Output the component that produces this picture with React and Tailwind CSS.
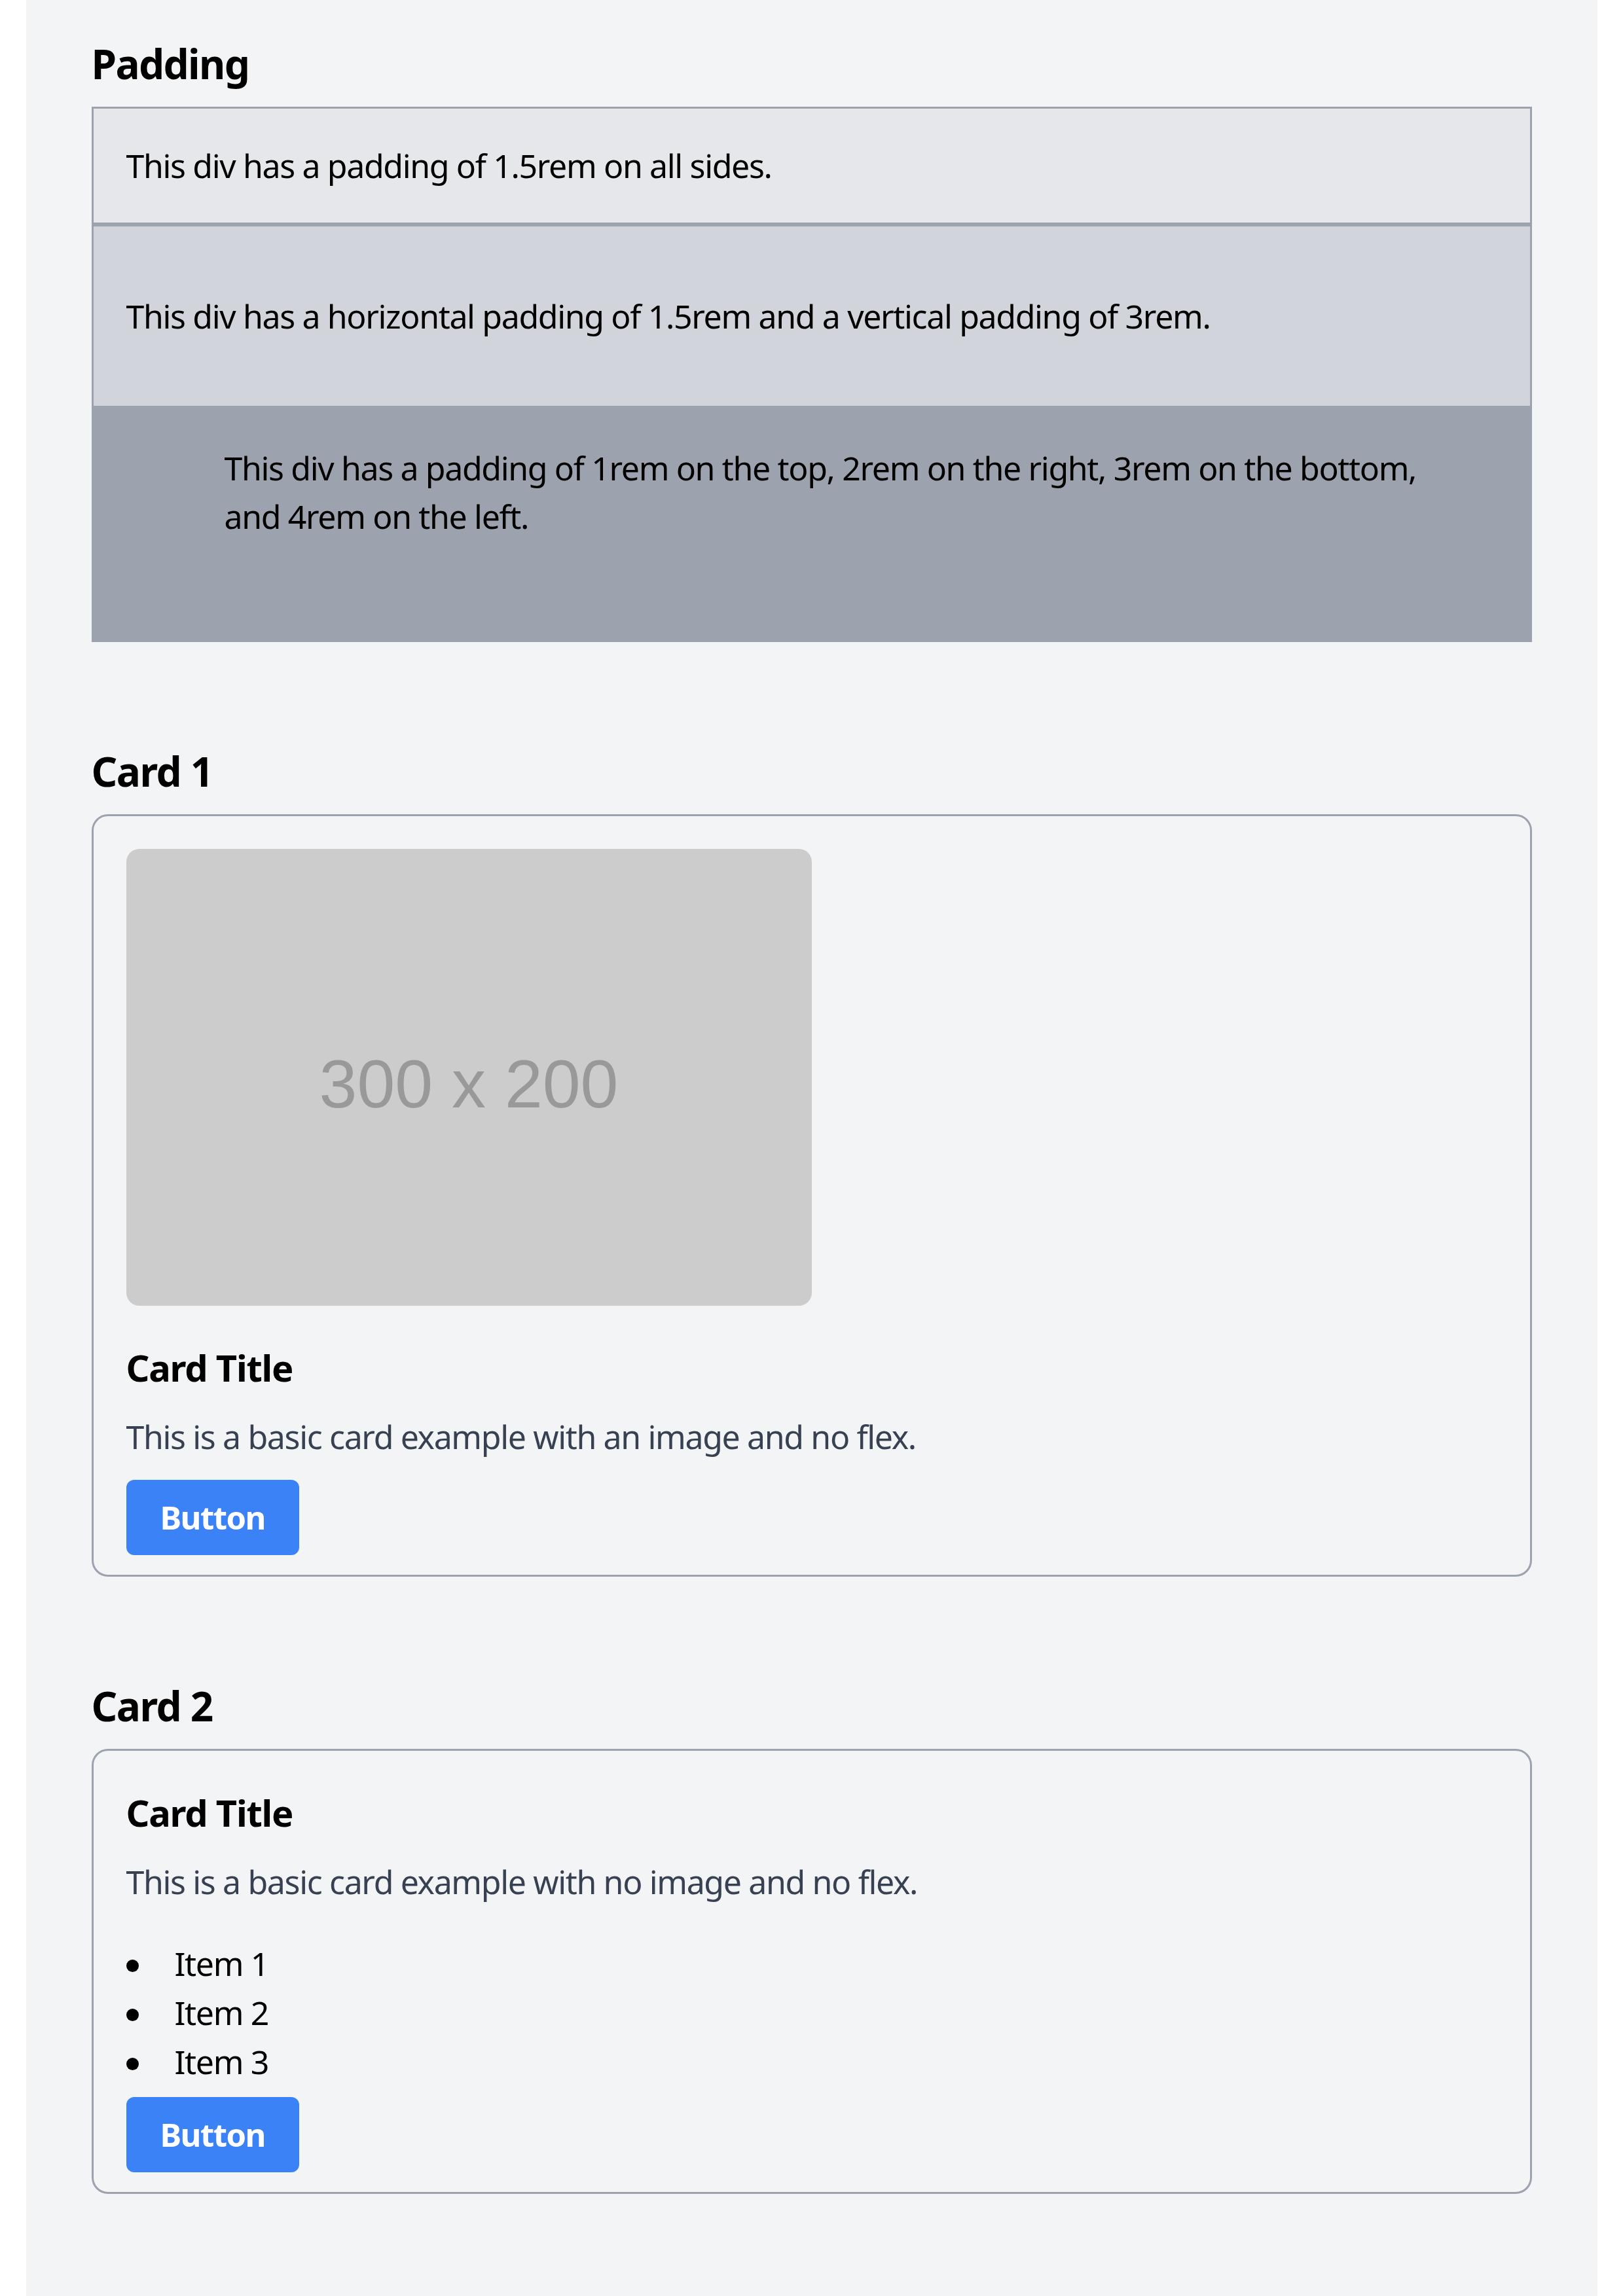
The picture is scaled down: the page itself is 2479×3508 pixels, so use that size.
export default function App() {
  const items = ["Item 1", "Item 2", "Item 3"];
  return (
    <div className="min-h-screen bg-white font-['Noto_Sans','Open_Sans',sans-serif] text-black">
      <div className="mx-auto min-h-screen max-w-[2400px] bg-[#f3f4f6] px-[100px] pt-[50px] pb-[150px]">
        <section>
          <h2 className="mb-[22px] pt-[3px] text-[62px] leading-[88px] font-bold tracking-[-1.6px]">Padding</h2>
          <div className="border-[3px] border-[#9ca3af] bg-[#e5e7eb] p-[50px] text-[50px] leading-[74px] tracking-[-1.35px]">
            This div has a padding of 1.5rem on all sides.
          </div>
          <div className="border-[3px] border-[#9ca3af] bg-[#d1d5db] px-[50px] py-[100px] text-[50px] leading-[74px] tracking-[-1.35px]">
            This div has a horizontal padding of 1.5rem and a vertical padding of 3rem.
          </div>
          <div className="border-[3px] border-[#9ca3af] bg-[#9ca3af] pt-[52px] pr-[100px] pb-[152px] pl-[200px] text-[50px] leading-[74px] tracking-[-1.35px]">
            This div has a padding of 1rem on the top, 2rem on the right, 3rem on the bottom, and 4rem on the left.
          </div>
        </section>

        <section className="mt-[150px]">
          <h2 className="mb-[22px] pt-[3px] text-[62px] leading-[88px] font-bold tracking-[-1.5px]">Card 1</h2>
          <div className="rounded-[25px] border-[3px] border-[#9ca3af] px-[50px] pt-[50px] pb-[30px]">
            <div className="flex aspect-[3/2] w-1/2 items-center justify-center rounded-[20px] bg-[#cccccc] pt-[20px]">
              <span className="font-['Liberation_Sans',Arial,sans-serif] text-[104px] leading-none text-[#999999]">300 x 200</span>
            </div>
            <h3 className="mt-[50px] mb-[25px] text-[56px] leading-[88px] font-bold tracking-[-1.2px]">Card Title</h3>
            <p className="mb-[28px] text-[50px] leading-[75px] tracking-[-1.35px] text-[#374151]">
              This is a basic card example with an image and no flex.
            </p>
            <button className="block h-[115px] rounded-[12px] bg-[#3b82f6] px-[52px] text-[49px] leading-none font-bold tracking-[-1.5px] text-white">
              Button
            </button>
          </div>
        </section>

        <section className="mt-[150px]">
          <h2 className="mb-[22px] pt-[3px] text-[62px] leading-[88px] font-bold tracking-[-1.5px]">Card 2</h2>
          <div className="rounded-[25px] border-[3px] border-[#9ca3af] px-[50px] pt-[50px] pb-[30px]">
            <h3 className="mb-[25px] text-[56px] leading-[88px] font-bold tracking-[-1.2px]">Card Title</h3>
            <p className="mb-[50px] text-[50px] leading-[75px] tracking-[-1.35px] text-[#374151]">
              This is a basic card example with no image and no flex.
            </p>
            <ul className="mb-[16px] text-[50px] leading-[75px] tracking-[-1.35px]">
              {items.map((it) => (
                <li key={it} className="flex items-center">
                  <span className="mt-[5px] h-[19px] w-[19px] shrink-0 rounded-full bg-black" />
                  <span className="ml-[55px]">{it}</span>
                </li>
              ))}
            </ul>
            <button className="block h-[115px] rounded-[12px] bg-[#3b82f6] px-[52px] text-[49px] leading-none font-bold tracking-[-1.5px] text-white">
              Button
            </button>
          </div>
        </section>
      </div>
    </div>
  );
}
